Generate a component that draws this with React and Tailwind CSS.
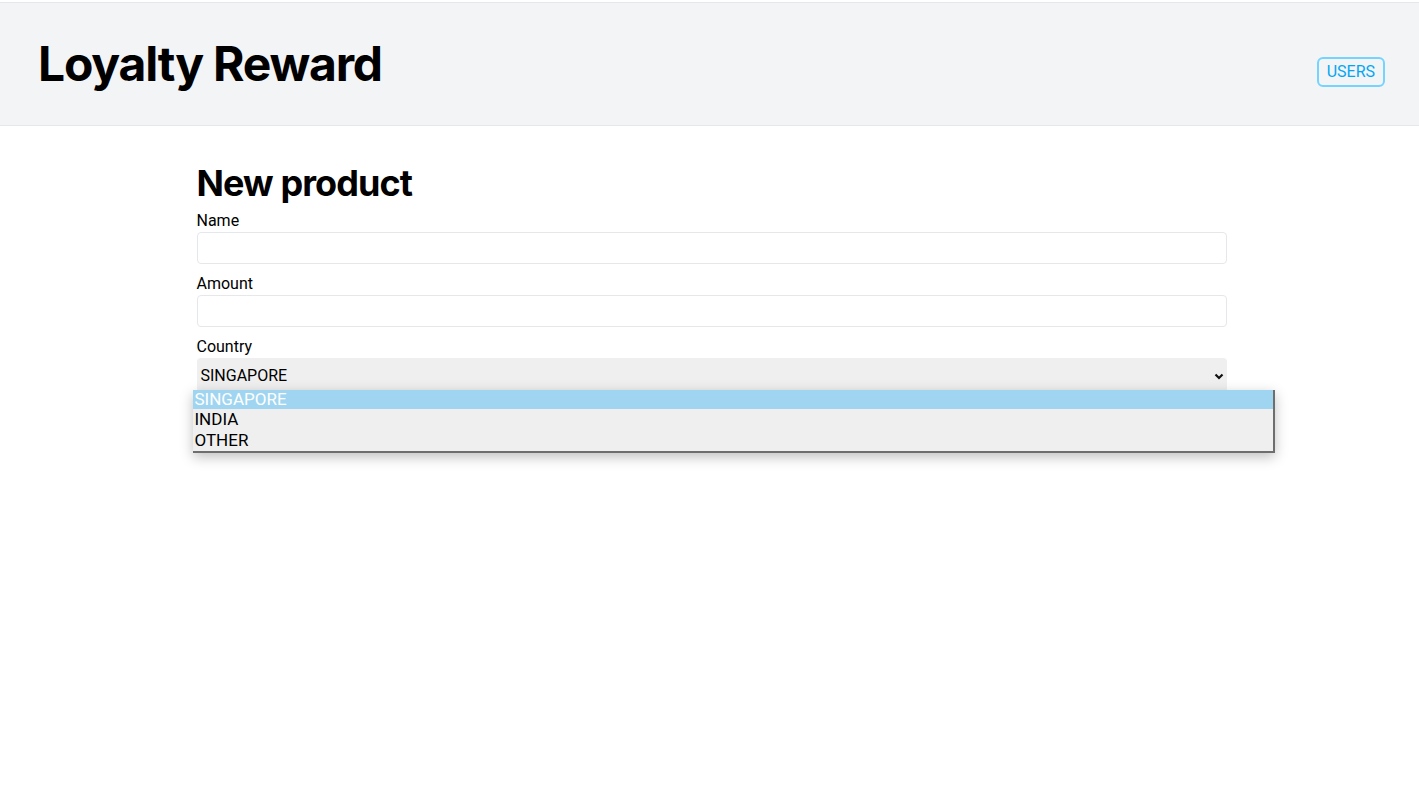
import React, { useState } from 'react';

const countries = ['SINGAPORE', 'INDIA', 'OTHER'];

const Field = ({ label, children }) => (
  <div className="flex flex-col">
    <label className="h-6 pt-[2px] font-['Roboto',sans-serif] text-base leading-[22px] text-black">{label}</label>
    {children}
  </div>
);

const App = () => {
  const [name, setName] = useState('');
  const [amount, setAmount] = useState('');
  const [country] = useState('SINGAPORE');

  return (
    <div className="min-h-[797px] bg-white pt-[2px] font-['Inter',sans-serif] text-black">
      <header className="flex items-end justify-between border-y border-gray-200 bg-gray-100 py-[37px] pl-[38px] pr-[34px]">
        <h1 className="text-5xl font-bold leading-[48px] tracking-tight">Loyalty Reward</h1>
        <button className="mb-[1px] flex h-[30px] items-center rounded-md border-2 border-sky-300 px-[8px] font-['Roboto',sans-serif] text-base text-sky-500">
          USERS
        </button>
      </header>

      <main className="mx-auto w-[1030px] translate-x-[2px] pt-[37px]">
        <h2 className="mb-[5px] text-4xl font-bold leading-[40px] tracking-tight">New product</h2>

        <div className="flex flex-col gap-[7px]">
          <Field label="Name">
            <input
              className="h-8 w-full rounded border border-gray-200 px-2 outline-none"
              value={name}
              onChange={(e) => setName(e.target.value)}
            />
          </Field>
          <Field label="Amount">
            <input
              className="h-8 w-full rounded border border-gray-200 px-2 outline-none"
              value={amount}
              onChange={(e) => setAmount(e.target.value)}
            />
          </Field>
          <Field label="Country">
            <div className="relative">
              <div className="flex h-[34px] w-full items-center justify-between rounded bg-[#efefef] pl-1 pr-[3px] pt-[2px] font-['Roboto',sans-serif] text-base">
                <span>{country}</span>
                <svg width="10" height="8" viewBox="0 0 10 8" fill="none">
                  <path d="M1.5 2.5 L5 6 L8.5 2.5" stroke="#111" strokeWidth="2.2" />
                </svg>
              </div>

              {/* open dropdown list */}
              <ul className="absolute left-[-4px] top-[32px] z-10 w-[1082px] border-r-2 border-b-2 border-[#6e6e6e] bg-[#efefef] font-['Roboto',sans-serif] text-[17px] shadow-[0_4px_12px_rgba(0,0,0,0.25)]">
                {countries.map((c) => (
                  <li
                    key={c}
                    className={
                      c === country
                        ? 'h-[19px] bg-[#9fd5f0] px-[2px] leading-[18px] text-white'
                        : 'h-[21px] px-[2px] leading-[21px] text-black'
                    }
                  >
                    {c}
                  </li>
                ))}
              </ul>
            </div>
          </Field>
        </div>
      </main>
    </div>
  );
};

export default App;
